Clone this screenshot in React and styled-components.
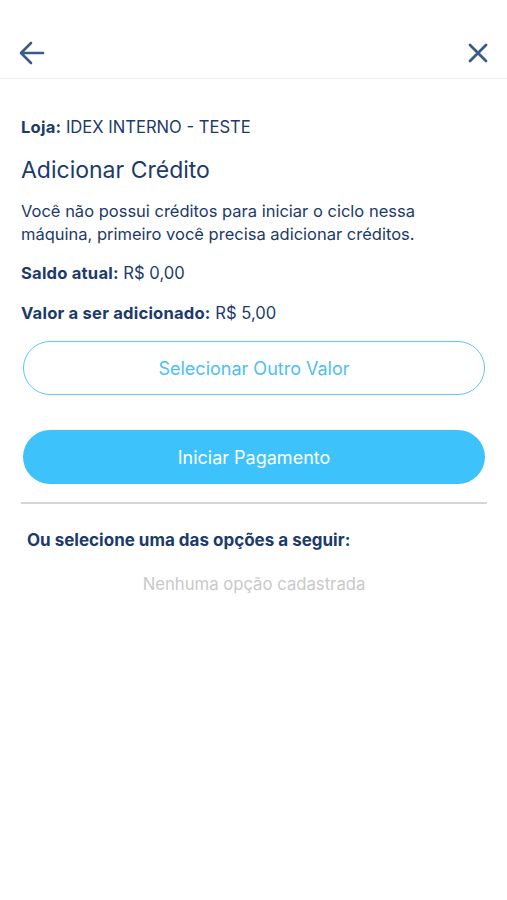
import React from "react";
import styled, { createGlobalStyle } from "styled-components";

const GlobalStyle = createGlobalStyle`
  body {
    margin: 0;
    background: #ffffff;
    font-family: Inter, "Liberation Sans", Arial, sans-serif;
  }
`;

function App() {
  return (
    <Screen>
      <GlobalStyle />
      <Header>
        <IconButton aria-label="Voltar" top={15}>
          <svg width="26" height="24" viewBox="0 0 26 24" fill="none">
            <path
              d="M24 12H3M12 2L2 12l10 10"
              stroke="#3a5a89"
              strokeWidth="2.6"
              strokeLinecap="round"
              strokeLinejoin="round"
            />
          </svg>
        </IconButton>
        <IconButton aria-label="Fechar" top={17}>
          <svg width="20" height="20" viewBox="0 0 20 20" fill="none">
            <path
              d="M2 2l16 16M18 2L2 18"
              stroke="#3a5a89"
              strokeWidth="2.8"
              strokeLinecap="round"
            />
          </svg>
        </IconButton>
      </Header>

      <Content>
        <InfoLine top={38}>
          <b>Loja:</b> IDEX INTERNO - TESTE
        </InfoLine>
        <Title>Adicionar Crédito</Title>
        <Paragraph>
          Você não possui créditos para iniciar o ciclo nessa
          <br />
          máquina, primeiro você precisa adicionar créditos.
        </Paragraph>
        <InfoLine top={17}>
          <b>Saldo atual:</b> R$ 0,00
        </InfoLine>
        <InfoLine top={20}>
          <b>Valor a ser adicionado:</b> R$ 5,00
        </InfoLine>

        <OutlineButton>Selecionar Outro Valor</OutlineButton>
        <FilledButton>Iniciar Pagamento</FilledButton>

        <Divider />

        <SectionTitle>Ou selecione uma das opções a seguir:</SectionTitle>
        <Empty>Nenhuma opção cadastrada</Empty>
      </Content>
    </Screen>
  );
}

export default App;

const Screen = styled.div`
  width: 507px;
  min-height: 900px;
  background: #fff;
  color: #1c3a6a;
`;

const Header = styled.div`
  height: 79px;
  box-sizing: border-box;
  padding: 26px 19px 0 19px;
  display: flex;
  justify-content: space-between;
  align-items: flex-start;
  border-bottom: 1px solid #eeeeee;
`;

const IconButton = styled.button`
  background: none;
  border: none;
  padding: 0;
  margin-top: ${(p) => p.top}px;
  display: flex;
  cursor: pointer;
`;

const Content = styled.div`
  padding: 0 20px 0 21px;
  display: flex;
  flex-direction: column;
`;

const InfoLine = styled.div`
  margin-top: ${(p) => p.top}px;
  font-size: 16.6px;
  line-height: 20px;
  color: #1c3a6a;

  b {
    font-weight: 700;
    letter-spacing: 0.2px;
  }
`;

const Title = styled.h2`
  margin: 19px 0 0;
  font-size: 23px;
  font-weight: 400;
  line-height: 28px;
  color: #1c3a6a;
`;

const Paragraph = styled.p`
  margin: 16px 0 0;
  font-size: 16.5px;
  line-height: 23px;
  color: #1c3a6a;
`;

const PillButton = styled.button`
  height: 54px;
  margin: 0 2px 0 2px;
  border-radius: 27px;
  font-family: Inter, "Liberation Sans", Arial, sans-serif;
  font-size: 18px;
  cursor: pointer;
`;

const OutlineButton = styled(PillButton)`
  margin-top: 18px;
  background: #fff;
  border: 1.5px solid #5cc6f6;
  color: #4dbff5;
`;

const FilledButton = styled(PillButton)`
  margin-top: 35px;
  background: #3ec2fc;
  border: none;
  color: #fff;
`;

const Divider = styled.div`
  margin-top: 18px;
  height: 2px;
  background: #d6d6d6;
`;

const SectionTitle = styled.div`
  margin: 26px 0 0 6px;
  font-size: 17px;
  font-weight: 700;
  line-height: 20px;
  color: #1c3a6a;
`;

const Empty = styled.div`
  margin-top: 24px;
  text-align: center;
  font-size: 16.7px;
  line-height: 20px;
  color: #c9c9c9;
`;
